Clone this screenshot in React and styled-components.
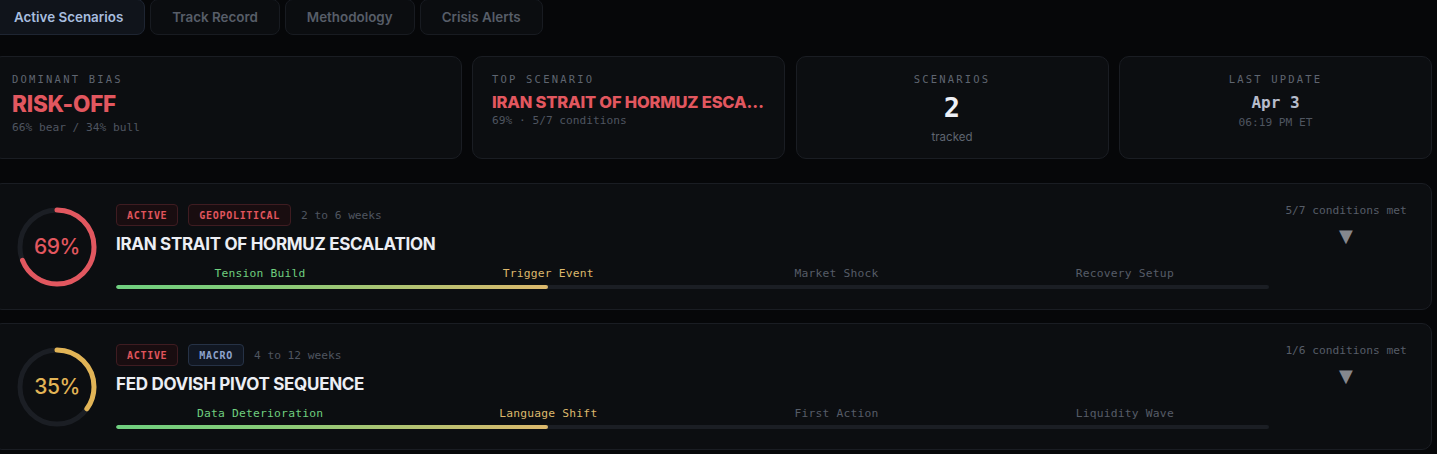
import React from "react";
import styled, { createGlobalStyle } from "styled-components";

const GlobalStyle = createGlobalStyle`
  html, body {
    margin: 0;
    padding: 0;
    background: #060709;
    overflow: hidden;
  }
  body {
    font-family: Inter, "Noto Sans", sans-serif;
    color: #e6e8ee;
  }
`;

const mono = `"DejaVu Sans Mono", "Liberation Mono", monospace`;

const Page = styled.div`
  width: 1440px;
  margin: -1px 0 0 -8px;
  display: flex;
  flex-direction: column;
`;

const Tabs = styled.div`
  display: flex;
  gap: 5px;
`;

const Tab = styled.button`
  height: 36px;
  padding: 0 21px;
  border-radius: 8px;
  border: 1px solid ${(p) => (p.$active ? "#1e2532" : "#181b21")};
  background: ${(p) => (p.$active ? "#10141b" : "#0b0d10")};
  color: ${(p) => (p.$active ? "#a7bddf" : "#575d68")};
  font-family: Inter, sans-serif;
  font-size: 13.4px;
  font-weight: 600;
  cursor: pointer;
`;

const StatGrid = styled.div`
  margin-top: 21px;
  display: grid;
  grid-template-columns: 1.5fr 1fr 1fr 1fr;
  gap: 10.5px;
`;

const StatCard = styled.div`
  height: 103px;
  box-sizing: border-box;
  padding: 16px 19px;
  border-radius: 10px;
  border: 1px solid #1a1d23;
  background: #0c0e11;
  display: flex;
  flex-direction: column;
  align-items: ${(p) => (p.$center ? "center" : "flex-start")};
  min-width: 0;
`;

const StatLabel = styled.div`
  font-family: ${mono};
  font-size: 10.5px;
  letter-spacing: 2.2px;
  color: #5f6570;
  line-height: 12px;
`;

const Bias = styled.div`
  margin-top: 6px;
  font-weight: 800;
  font-size: 22.5px;
  line-height: 26px;
  color: #e2575f;
  letter-spacing: -0.2px;
`;

const TopTitle = styled.div`
  margin-top: 7px;
  font-weight: 800;
  font-size: 16.5px;
  line-height: 20px;
  color: #e2575f;
  max-width: 100%;
  white-space: nowrap;
  overflow: hidden;
  text-overflow: ellipsis;
  letter-spacing: -0.2px;
`;

const SubMono = styled.div`
  margin-top: ${(p) => p.$mt || 0}px;
  font-family: ${mono};
  font-size: 11.2px;
  color: #4f5560;
  line-height: 14px;
`;

const Count = styled.div`
  margin-top: 7px;
  font-family: ${mono};
  font-weight: 700;
  font-size: 27px;
  line-height: 32px;
  color: #eef0f6;
`;

const Tracked = styled.div`
  margin-top: 6px;
  font-size: 11.5px;
  color: #5f6570;
`;

const DateText = styled.div`
  margin-top: 7px;
  font-family: ${mono};
  font-weight: 700;
  font-size: 16px;
  line-height: 22px;
  color: #b6bccb;
`;

const List = styled.div`
  margin-top: 24px;
  display: flex;
  flex-direction: column;
  gap: 13px;
`;

const ScenarioCard = styled.div`
  height: 127px;
  box-sizing: border-box;
  padding: 0 24px;
  border-radius: 10px;
  border: 1px solid #1a1d23;
  background: #0c0e11;
  display: flex;
  align-items: center;
  gap: 19px;
`;

const RingWrap = styled.div`
  position: relative;
  width: 80px;
  height: 80px;
  flex: none;
  display: flex;
  align-items: center;
  justify-content: center;
`;

const RingSvg = styled.svg`
  position: absolute;
  inset: 0;
  transform: rotate(-90deg);
`;

const RingValue = styled.span`
  font-size: 21px;
  font-weight: 500;
  color: ${(p) => p.$color};
  letter-spacing: -0.5px;
`;

const Middle = styled.div`
  flex: 1;
  display: flex;
  flex-direction: column;
  align-self: stretch;
  padding-top: 20px;
`;

const BadgeRow = styled.div`
  display: flex;
  align-items: center;
  gap: 10px;
`;

const Badge = styled.span`
  height: 22px;
  box-sizing: border-box;
  padding: 0 10px;
  display: inline-flex;
  align-items: center;
  border-radius: 4px;
  font-family: ${mono};
  font-size: 10px;
  font-weight: 700;
  letter-spacing: 0.7px;
  color: ${(p) => (p.$tone === "blue" ? "#8ea3cc" : "#e0555d")};
  background: ${(p) => (p.$tone === "blue" ? "#111722" : "#190d10")};
  border: 1px solid ${(p) => (p.$tone === "blue" ? "#263246" : "#3f1c21")};
`;

const Horizon = styled.span`
  font-family: ${mono};
  font-size: 11.2px;
  color: #4f5560;
`;

const Title = styled.div`
  margin-top: 7px;
  font-size: 17px;
  font-weight: 700;
  line-height: 22px;
  color: #eceef4;
  letter-spacing: -0.3px;
`;

const Phases = styled.div`
  margin-top: 12px;
  display: grid;
  grid-template-columns: repeat(4, 1fr);
`;

const Phase = styled.span`
  text-align: center;
  font-family: ${mono};
  font-size: 11.3px;
  letter-spacing: 0.2px;
  line-height: 14px;
  color: ${(p) => p.$color};
`;

const Track = styled.div`
  margin-top: 4px;
  height: 4px;
  border-radius: 2px;
  background: #1b1e24;
  overflow: hidden;
`;

const Fill = styled.div`
  height: 100%;
  border-radius: 2px;
  background: linear-gradient(90deg, #6fcf7f 0%, #86cc78 35%, #dcb86c 100%);
`;

const Side = styled.div`
  width: 122px;
  flex: none;
  margin-left: -3px;
  align-self: flex-start;
  padding-top: 20px;
  display: flex;
  flex-direction: column;
  align-items: center;
`;

const Conditions = styled.span`
  font-family: ${mono};
  font-size: 11.2px;
  color: #575d68;
  white-space: nowrap;
`;

const Caret = styled.span`
  margin-top: 9px;
  font-size: 18px;
  line-height: 20px;
  color: #85888e;
  font-family: "DejaVu Sans", sans-serif;
`;

const tabs = ["Active Scenarios", "Track Record", "Methodology", "Crisis Alerts"];

const scenarios = [
  {
    pct: 69,
    color: "#e2575f",
    category: "GEOPOLITICAL",
    tone: "red",
    horizon: "2 to 6 weeks",
    title: "IRAN STRAIT OF HORMUZ ESCALATION",
    phases: ["Tension Build", "Trigger Event", "Market Shock", "Recovery Setup"],
    conditions: "5/7 conditions met",
  },
  {
    pct: 35,
    color: "#e2b456",
    category: "MACRO",
    tone: "blue",
    horizon: "4 to 12 weeks",
    title: "FED DOVISH PIVOT SEQUENCE",
    phases: ["Data Deterioration", "Language Shift", "First Action", "Liquidity Wave"],
    conditions: "1/6 conditions met",
  },
];

const phaseColors = ["#6fcf7f", "#dcb86c", "#565c67", "#565c67"];

const Ring = ({ pct, color }) => {
  const r = 37;
  const c = 2 * Math.PI * r;
  return (
    <RingWrap>
      <RingSvg width="80" height="80" viewBox="0 0 80 80">
        <circle cx="40" cy="40" r={r} fill="none" stroke="#1b1e24" strokeWidth="5" />
        <circle
          cx="40"
          cy="40"
          r={r}
          fill="none"
          stroke={color}
          strokeWidth="5"
          strokeLinecap="round"
          strokeDasharray={`${(c * pct) / 100} ${c}`}
        />
      </RingSvg>
      <RingValue $color={color}>{pct}%</RingValue>
    </RingWrap>
  );
};

export default function App() {
  return (
    <>
      <GlobalStyle />
      <Page>
        <Tabs>
          {tabs.map((t, i) => (
            <Tab key={t} $active={i === 0}>
              {t}
            </Tab>
          ))}
        </Tabs>

        <StatGrid>
          <StatCard>
            <StatLabel>DOMINANT BIAS</StatLabel>
            <Bias>RISK-OFF</Bias>
            <SubMono $mt={4}>66% bear / 34% bull</SubMono>
          </StatCard>
          <StatCard>
            <StatLabel>TOP SCENARIO</StatLabel>
            <TopTitle>IRAN STRAIT OF HORMUZ ESCALATION</TopTitle>
            <SubMono $mt={2}>69% · 5/7 conditions</SubMono>
          </StatCard>
          <StatCard $center>
            <StatLabel>SCENARIOS</StatLabel>
            <Count>2</Count>
            <Tracked>tracked</Tracked>
          </StatCard>
          <StatCard $center>
            <StatLabel>LAST UPDATE</StatLabel>
            <DateText>Apr 3</DateText>
            <SubMono $mt={2}>06:19 PM ET</SubMono>
          </StatCard>
        </StatGrid>

        <List>
          {scenarios.map((s) => (
            <ScenarioCard key={s.title}>
              <Ring pct={s.pct} color={s.color} />
              <Middle>
                <BadgeRow>
                  <Badge>ACTIVE</Badge>
                  <Badge $tone={s.tone}>{s.category}</Badge>
                  <Horizon>{s.horizon}</Horizon>
                </BadgeRow>
                <Title>{s.title}</Title>
                <Phases>
                  {s.phases.map((p, i) => (
                    <Phase key={p} $color={phaseColors[i]}>
                      {p}
                    </Phase>
                  ))}
                </Phases>
                <Track>
                  <Fill style={{ width: "37.5%" }} />
                </Track>
              </Middle>
              <Side>
                <Conditions>{s.conditions}</Conditions>
                <Caret>▼</Caret>
              </Side>
            </ScenarioCard>
          ))}
        </List>
      </Page>
    </>
  );
}
